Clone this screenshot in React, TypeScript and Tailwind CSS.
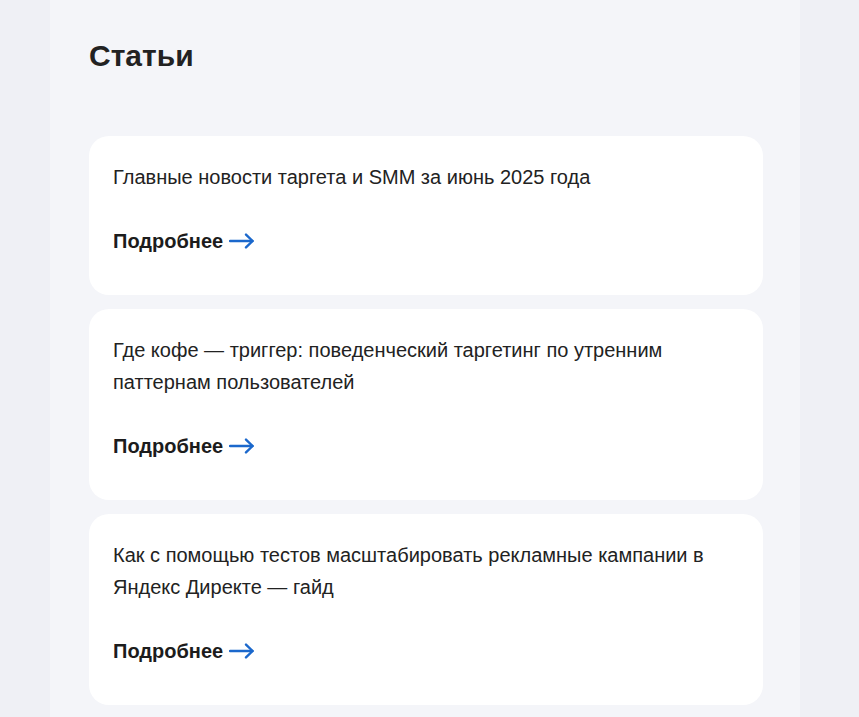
const ARTICLES = [
  'Главные новости таргета и SMM за июнь 2025 года',
  'Где кофе — триггер: поведенческий таргетинг по утренним паттернам пользователей',
  'Как с помощью тестов масштабировать рекламные кампании в Яндекс Директе — гайд',
];

function ArrowRight() {
  return (
    <svg width="26" height="16" viewBox="0 0 26 16" fill="none" aria-hidden>
      <path d="M1 8h22.5" stroke="#1b68cc" strokeWidth="2.4" strokeLinecap="round" />
      <path
        d="M17 1.6L23.6 8L17 14.4"
        stroke="#1b68cc"
        strokeWidth="2.4"
        strokeLinecap="round"
        strokeLinejoin="round"
      />
    </svg>
  );
}

function ArticleCard({ title }: { title: string }) {
  return (
    <div className="rounded-[20px] bg-white px-6 pt-[25px] pb-[42px]">
      <p className="text-[20px] leading-[32px] text-[#222]">{title}</p>
      <a href="#" className="mt-[36px] flex items-center gap-[6px] text-[20px] font-bold leading-6 text-[#1c1c1c]">
        Подробнее
        <ArrowRight />
      </a>
    </div>
  );
}

export default function App() {
  return (
    <div className="min-h-[717px] bg-[#eff0f5] font-['Liberation_Sans',Arial,sans-serif]">
      <div className="ml-[50px] min-h-[717px] w-[750px] bg-[#f4f5f9] px-[39px] pt-[38px]">
        <h1 className="mb-[62px] text-[30px] font-bold leading-9 text-[#222]">Статьи</h1>
        <div className="flex w-[674px] flex-col gap-[14px]">
          {ARTICLES.map((t) => (
            <ArticleCard key={t} title={t} />
          ))}
        </div>
      </div>
    </div>
  );
}
